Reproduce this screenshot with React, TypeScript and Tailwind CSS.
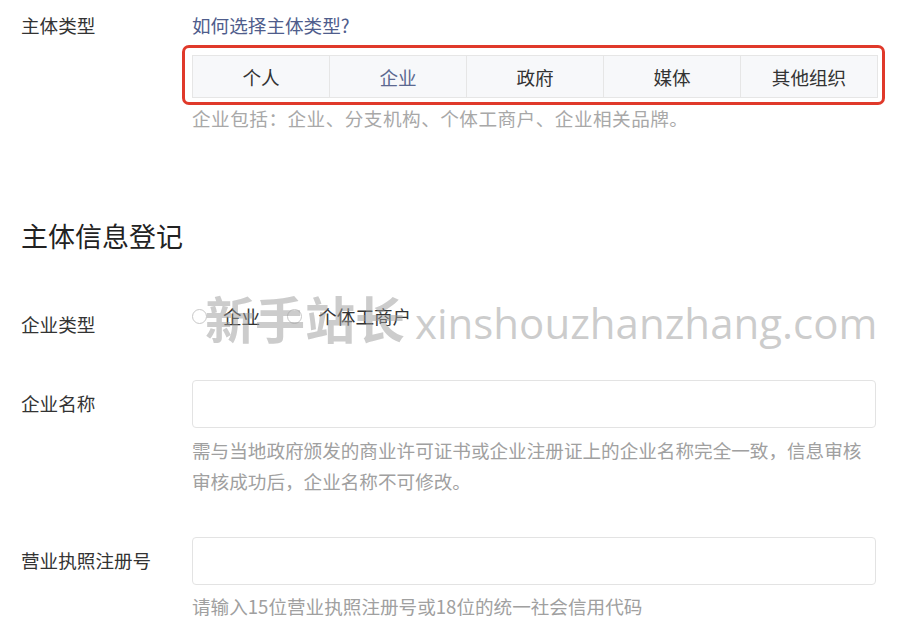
const tabs = ["个人", "企业", "政府", "媒体", "其他组织"];

function Radio({ label }: { label: string }) {
  return (
    <label className="flex items-center gap-[16px]">
      <span className="w-[15px] h-[15px] rounded-full border border-[#c8c8c8] bg-white" />
      <span>{label}</span>
    </label>
  );
}

export default function App() {
  return (
    <div
      className="relative w-[900px] h-[631px] overflow-hidden bg-white text-[18.6px] text-[#333]"
      style={{ fontFamily: '"Noto Sans CJK SC", "Noto Sans", sans-serif' }}
    >
      <div className="pl-[21px] pr-[22px] pt-[11px]">
        {/* 主体类型 */}
        <div className="flex">
          <div className="w-[171px] shrink-0 leading-[28px]">主体类型</div>
          <div className="flex-1">
            <div className="leading-[28px] text-[#4f5d8c]">如何选择主体类型?</div>
            <div className="relative mt-[16px]">
              <div className="absolute -left-[10px] -right-[7px] -top-[10px] -bottom-[7px] rounded-[7px] border-[3px] border-[#e0392a]" />
              <div className="flex h-[43px] border border-[#e6e6e6] bg-[#f7f8fa]">
                {tabs.map((t, i) => (
                  <div
                    key={t}
                    className={`flex-1 flex items-center justify-center ${i > 0 ? "border-l border-[#e6e6e6]" : ""} ${t === "企业" ? "text-[#5b6890]" : "text-[#333]"}`}
                  >
                    {t}
                  </div>
                ))}
              </div>
            </div>
            <div className="mt-[5px] leading-[30px] text-[#a8a8a8] whitespace-nowrap tracking-[0.5px]">企业包括：企业、分支机构、个体工商户、企业相关品牌。</div>
          </div>
        </div>

        {/* 主体信息登记 */}
        <div className="mt-[85px] text-[27px] leading-[36px] text-[#222]">主体信息登记</div>

        <div className="mt-[48px] flex items-start">
          <div className="w-[171px] shrink-0 leading-[28px] pt-[8px]">企业类型</div>
          <div className="flex items-center gap-[27px] leading-[28px]">
            <Radio label="企业" />
            <Radio label="个体工商户" />
          </div>
        </div>

        <div className="mt-[42px] flex">
          <div className="w-[171px] shrink-0 leading-[28px] pt-[9px]">企业名称</div>
          <div className="flex-1">
            <div className="h-[48px] mr-[2px] rounded-[4px] border border-[#e3e3e3] bg-white" />
            <div className="mt-[6px] leading-[31px] text-[#a0a0a0] whitespace-nowrap">
              需与当地政府颁发的商业许可证书或企业注册证上的企业名称完全一致，信息审核
              <br />
              审核成功后，企业名称不可修改。
            </div>
          </div>
        </div>

        <div className="mt-[41px] flex">
          <div className="w-[171px] shrink-0 leading-[28px] pt-[9px] whitespace-nowrap">营业执照注册号</div>
          <div className="flex-1">
            <div className="h-[48px] mr-[2px] rounded-[4px] border border-[#e3e3e3] bg-white" />
            <div className="mt-[5px] leading-[31px] text-[#a0a0a0] whitespace-nowrap">请输入15位营业执照注册号或18位的统一社会信用代码</div>
          </div>
        </div>
      </div>

      {/* watermark */}
      <div className="absolute left-[205px] top-[286px] flex items-baseline gap-[10px] whitespace-nowrap pointer-events-none text-[#999]/50">
        <span className="text-[50px] font-bold leading-[62px]">新手站长</span>
        <span className="text-[42px] leading-[62px]" style={{ fontFamily: '"Open Sans", sans-serif' }}>
          xinshouzhanzhang.com
        </span>
      </div>
    </div>
  );
}
